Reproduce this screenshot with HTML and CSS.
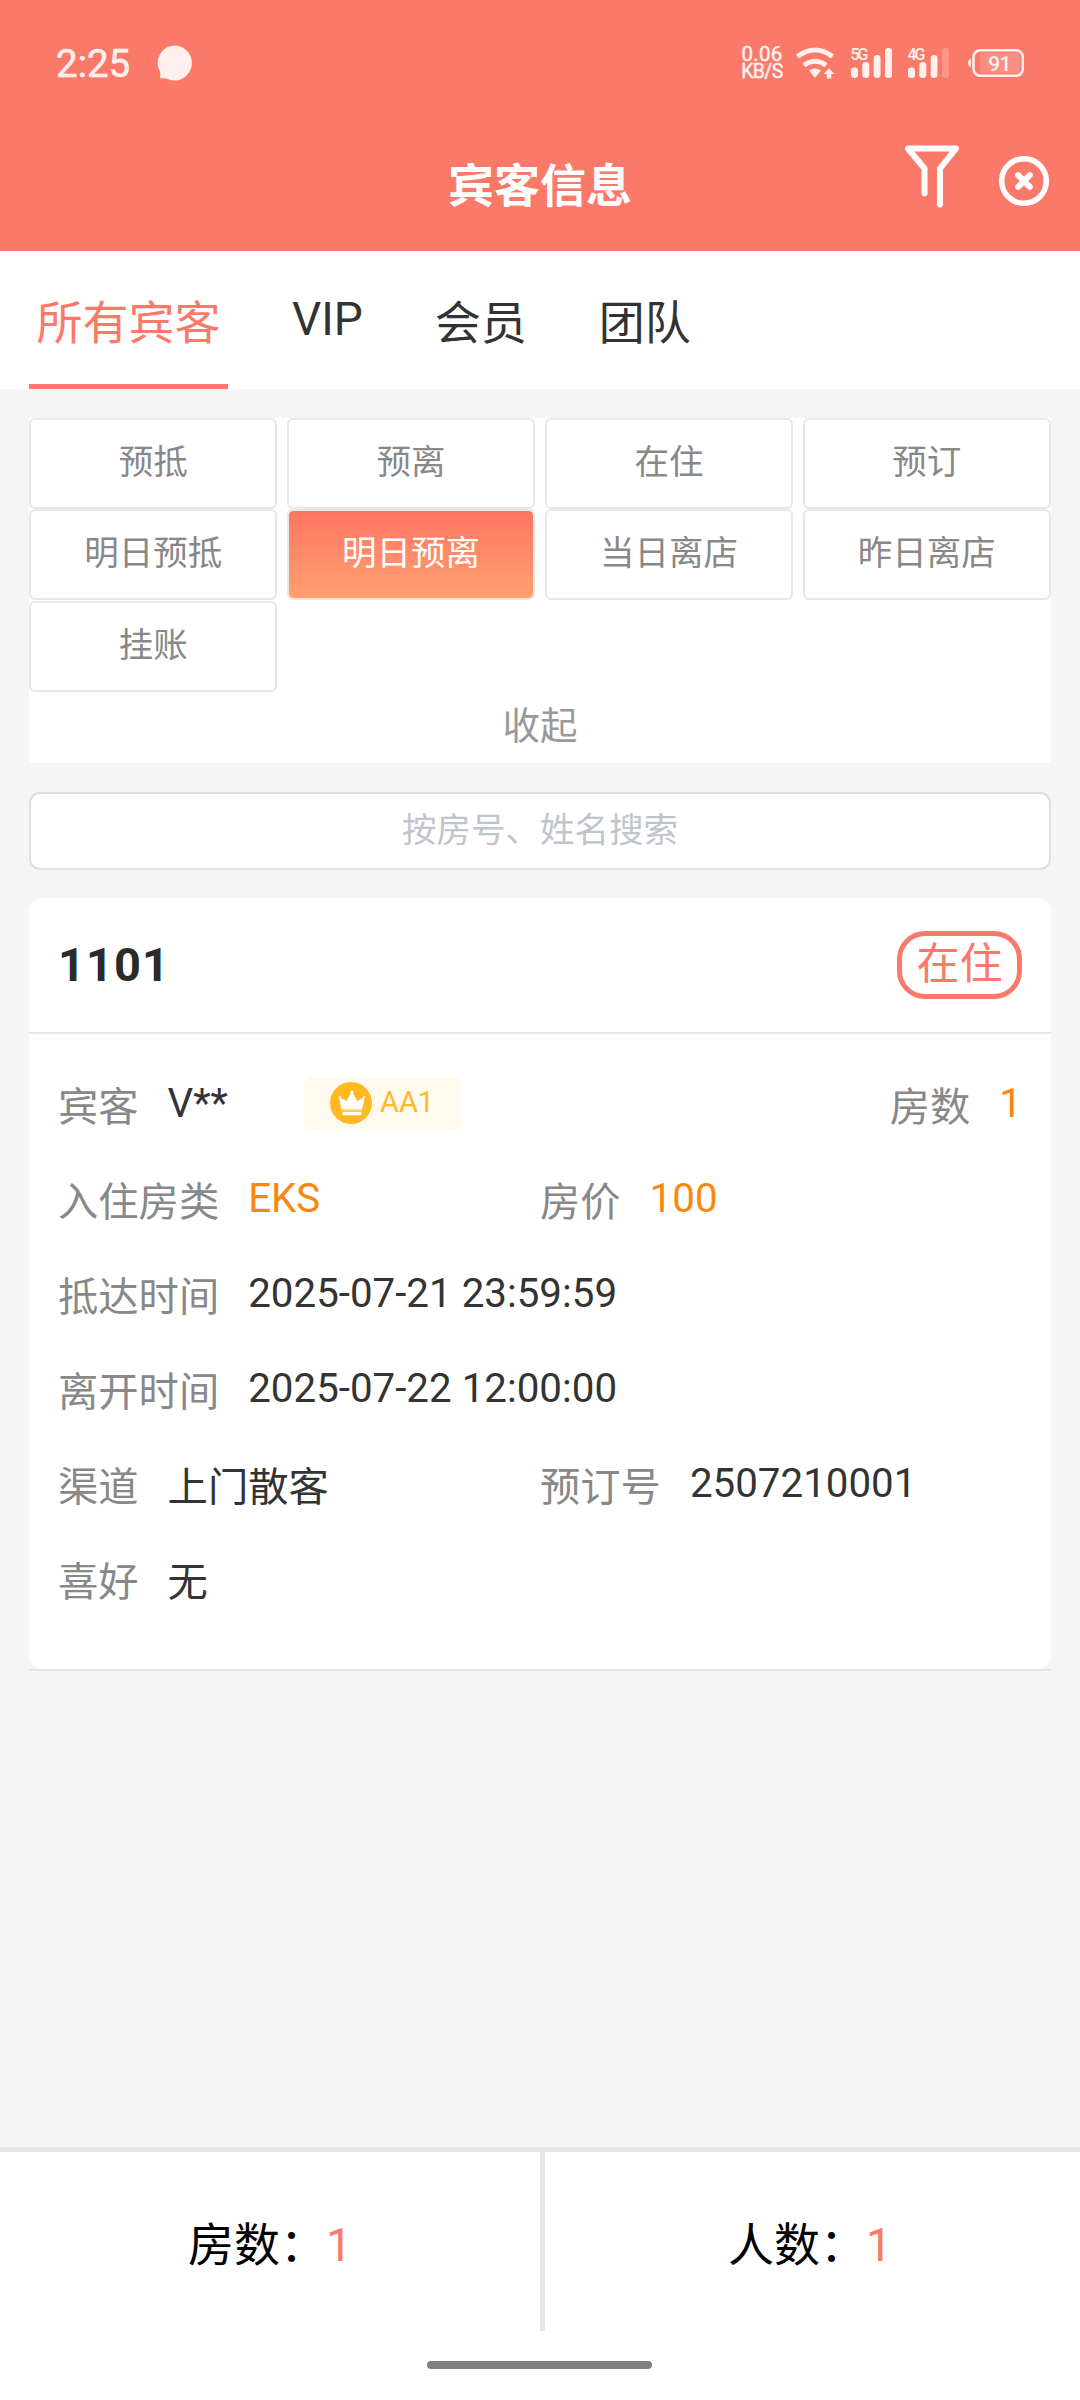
FILE: index.html
```html
<!DOCTYPE html>
<html lang="zh-CN">
<head>
<meta charset="utf-8">
<title>宾客信息</title>
<link rel="stylesheet" href="styles.css">
</head>
<body>
<div class="app">
  <header class="header">
    <div class="status">
      <span class="time">2:25</span>
      <svg class="bubble" width="36" height="36" viewBox="0 0 36 36"><path d="M18 .5a17.3 17.5 0 1 1-8.5 33Q6.500 33 3 33.200 3.500 30 3.200 27A17.300 17.500 0 0 1 18 .5z"/></svg>
      <div class="net"><span>0.06</span><span>KB/S</span></div>
      <svg class="wifi" width="41" height="32" viewBox="0 0 41 32">
        <path class="arc" d="M2.500 9.500Q20 -3.500 37.500 9.500M9 18.200Q20 10.200 31 18.200"/>
        <path d="M14 23.500Q20 19.300 26 23.500L20 30.700z"/>
        <path d="M34 22l5.500 5.500H36.200V32H31.800V27.500H28.500z" transform="matrix(1 0 0 1 0 -0.500)"/>
      </svg>
      <svg class="signal" width="42" height="32" viewBox="0 0 42 32">
        <text x="-0.500" y="12.500" textLength="18">5G</text>
        <rect x="0" y="20.500" width="7" height="10.500" rx="3.300"/><rect x="11.300" y="15" width="7" height="16" rx="3.300"/><rect x="22.700" y="8" width="6.800" height="23" rx="3.300"/><rect x="34" y="1" width="7" height="30" rx="3.300"/>
      </svg>
      <svg class="signal last" width="42" height="32" viewBox="0 0 42 32">
        <text x="-0.500" y="12.500" textLength="18">4G</text>
        <rect x="0" y="20.500" width="7" height="10.500" rx="3.300"/><rect x="11.300" y="15" width="7" height="16" rx="3.300"/><rect x="22.700" y="8" width="6.800" height="23" rx="3.300"/><rect class="dim" x="34" y="1" width="7" height="30" rx="3.300"/>
      </svg>
      <svg class="battery" width="56" height="28" viewBox="0 0 56 28">
        <path d="M3 10v8Q0 17.500 0 14T3 10z"/>
        <rect class="case" x="5.500" y="1.200" width="49.300" height="25.600" rx="7"/>
        <rect class="charge" x="12" y="3.500" width="40" height="21" rx="4"/>
        <text x="31.500" y="22" text-anchor="middle">91</text>
      </svg>
    </div>
    <div class="titlebar">
      <span></span>
      <h1>宾客信息</h1>
      <div class="actions">
        <svg width="56" height="66" viewBox="0 0 56 66"><path d="M20.500 51.500V26.500L4 6.500H52L36 26.500V62.500"/></svg>
        <svg width="50" height="50" viewBox="0 0 50 50"><circle cx="25" cy="25" r="22.300"/><path class="cross" d="M19.200 19.200l11.600 11.600M30.800 19.200L19.200 30.800"/></svg>
      </div>
    </div>
  </header>

  <nav class="tabs">
    <a class="tab active">所有宾客</a>
    <a class="tab latin">VIP</a>
    <a class="tab">会员</a>
    <a class="tab">团队</a>
  </nav>

  <main class="main">
    <section class="filters">
      <div class="chips">
        <span class="chip">预抵</span><span class="chip">预离</span><span class="chip">在住</span><span class="chip">预订</span>
        <span class="chip">明日预抵</span><span class="chip selected">明日预离</span><span class="chip">当日离店</span><span class="chip">昨日离店</span>
        <span class="chip">挂账</span>
      </div>
      <div class="collapse">收起</div>
    </section>

    <input class="search" type="text" placeholder="按房号、姓名搜索">

    <section class="card-wrap">
      <div class="card">
        <div class="card-head"><strong>1101</strong><span class="tag">在住</span></div>
        <div class="card-body">
          <div class="row first">
            <div class="field"><span class="label">宾客</span><span class="value">V**</span></div>
            <div class="badge">
              <svg width="42" height="42" viewBox="0 0 42 42"><circle class="coin" cx="21" cy="21" r="21"/><path d="M11.500 27.500L9 15.500Q8 14 10 14 11.500 14 11 16L16.500 19 20.500 11.500Q20 8.500 22 8.500T23.200 11.500L27 19 33 16Q32.500 14 34.500 14T34.500 16L32 27.500z"/><path d="M12.500 28.500H31.500V32Q31.500 33.200 30 33.200H14Q12.500 33.200 12.500 32z"/><path class="band" d="M11.500 29.300H32"/></svg>
              <span>AA1</span>
            </div>
            <div class="field end"><span class="label">房数</span><span class="value orange">1</span></div>
          </div>
          <div class="row">
            <div class="field"><span class="label">入住房类</span><span class="value orange">EKS</span></div>
            <div class="field"><span class="label">房价</span><span class="value orange">100</span></div>
          </div>
          <div class="row"><div class="field"><span class="label">抵达时间</span><span class="value">2025-07-21 23:59:59</span></div></div>
          <div class="row"><div class="field"><span class="label">离开时间</span><span class="value">2025-07-22 12:00:00</span></div></div>
          <div class="row">
            <div class="field"><span class="label">渠道</span><span class="value cjk">上门散客</span></div>
            <div class="field"><span class="label">预订号</span><span class="value">2507210001</span></div>
          </div>
          <div class="row"><div class="field"><span class="label">喜好</span><span class="value cjk">无</span></div></div>
        </div>
      </div>
    </section>
  </main>

  <footer class="footer">
    <div class="totals">
      <div class="total">房数：<b>1</b></div>
      <div class="total">人数：<b>1</b></div>
    </div>
    <div class="home"></div>
  </footer>
</div>
</body>
</html>
```
FILE: styles.css
```css
* { box-sizing: border-box; }

body {
  margin: 0;
  font-family: Roboto, "Noto Sans CJK SC", sans-serif;
  color: #333;
  background: #f5f5f5;
}

.app {
  display: flex;
  flex-direction: column;
  width: 1080px;
  height: 2400px;
}

/* Header */
.header {
  height: 251px;
  background: #fb7969;
  color: #fff;
}

.status {
  display: flex;
  align-items: flex-start;
  height: 126px;
  padding: 45px 56px 0 56px;
  color: #fff0ee;
  fill: #fff0ee;
}

.time {
  width: 101px;
  font-size: 38.5px;
  line-height: 38px;
  -webkit-text-stroke: 0.6px;
}

.net {
  display: flex;
  flex-direction: column;
  width: 44px;
  margin: 1px 11px 0 auto;
  font-size: 19.5px;
  line-height: 18px;
  text-align: center;
  letter-spacing: -0.6px;
  -webkit-text-stroke: 0.5px;
}

.net span:first-child {
  font-size: 20.5px;
  line-height: 17px;
  letter-spacing: 0.2px;
}

.wifi { margin: 2px 15px 0 0; }
.wifi .arc { fill: none; stroke: #fff0ee; stroke-width: 5; }
.signal { margin: 2px 15px 0 0; overflow: visible; }
.signal.last { margin-right: 18px; }
.signal text { font-size: 16px; font-weight: 500; }
.signal .dim { opacity: 0.25; }
.battery { margin-top: 4px; }
.battery .case { fill: none; stroke: #fff0ee; stroke-width: 2.5; }
.battery .charge { opacity: 0.18; }
.battery text { font-size: 21px; font-weight: 500; letter-spacing: -0.8px; }

.titlebar {
  display: grid;
  grid-template-columns: 1fr auto 1fr;
  height: 125px;
}

.titlebar h1 {
  margin: 0;
  padding-top: 30px;
  font-size: 46px;
  line-height: 60px;
  font-weight: 700;
}

.actions {
  display: flex;
  justify-content: flex-end;
  gap: 39px;
  padding: 16px 31px 0 0;
}

.actions svg { fill: none; stroke: #fff; stroke-width: 6; stroke-linecap: round; stroke-linejoin: round; }
.actions svg:last-child { margin-top: 14px; stroke-width: 5.5; }
.actions .cross { stroke-width: 6; }

/* Tabs */
.tabs {
  display: flex;
  gap: 56px;
  height: 138px;
  padding-left: 29px;
  background: #fff;
}

.tab {
  padding: 42px 8px 0;
  font-size: 46px;
  line-height: 60px;
}

.tab.latin { padding-top: 38px; }
.tab.active { padding: 42px 7.5px 0; color: #fb7969; border-bottom: 5px solid #fb7969; }

/* Content */
.main {
  flex: 1;
  padding: 29px;
}

.filters { height: 345px; background: #fff; }

.chips {
  display: grid;
  grid-template-columns: repeat(4, 1fr);
  grid-template-rows: 91px 92px 91px;
  column-gap: 9.5px;
}

.chip {
  height: 91px;
  border: 2px solid #e8e8e8;
  border-radius: 6px;
  font-size: 34.5px;
  line-height: 85px;
  text-align: center;
  color: #888;
}

.chip.selected {
  color: #fff;
  background: linear-gradient(#ff7463, #ffa16f) padding-box;
}

.collapse {
  font-size: 37.5px;
  line-height: 68px;
  text-align: center;
  color: #999;
}

.search {
  display: block;
  width: 100%;
  height: 78px;
  margin-top: 29px;
  padding: 0 0 2px;
  border: 2px solid #dcdfe6;
  border-radius: 11px;
  background: #fff;
  font: 34.5px Roboto, "Noto Sans CJK SC", sans-serif;
  text-align: center;
}

.search::placeholder { color: #c0c4cc; }

.card-wrap { margin-top: 28px; border-bottom: 2px solid #e6e6e6; }
.card { height: 771px; border-radius: 14px; background: #fff; }

.card-head {
  display: flex;
  align-items: center;
  justify-content: space-between;
  height: 136px;
  padding: 0 29px;
  border-bottom: 2px solid #e8e8e8;
}

.card-head strong {
  font-size: 47px;
  line-height: 60px;
  letter-spacing: 1px;
  color: #2a2a2a;
}

.tag {
  width: 125px;
  height: 68px;
  border: 5px solid #fb7969;
  border-radius: 28px;
  font-size: 43px;
  line-height: 56px;
  text-align: center;
  color: #fb7969;
}

.card-body { padding: 47px 29px 0; }

.row {
  display: grid;
  grid-template-columns: 482px 1fr;
  height: 95px;
  font-size: 40.3px;
  line-height: 46px;
}

.row.first { grid-template-columns: 246px 157px 1fr; }
.field { display: flex; align-items: flex-start; gap: 29px; white-space: nowrap; }
.field.end { justify-content: flex-end; }
.label { padding-top: 4px; color: #888; }
.value.cjk { padding-top: 4px; }
.orange { color: #f8870f; }

.badge {
  display: flex;
  align-items: center;
  gap: 8px;
  height: 53px;
  margin-top: -4px;
  padding-left: 26px;
  border-radius: 7px;
  background: #fff9ee;
  color: #fdb927;
  font-size: 29px;
}

.badge span { padding-bottom: 3px; }
.badge svg { margin-bottom: 2px; fill: #fff; }
.badge .coin { fill: #ffb923; }
.badge .band { stroke: #ffc44a; stroke-width: 1.5; }

/* Footer */
.footer {
  height: 253px;
  border-top: 5px solid #e6e6e6;
  background: #fff;
}

.totals { display: grid; grid-template-columns: 1fr 1fr; height: 178px; }

.total {
  padding-top: 8px;
  font-size: 46px;
  line-height: 171px;
  text-align: center;
  color: #000;
}

.total + .total { border-left: 5px solid #e6e6e6; padding-right: 5px; }
.total b { font-weight: 400; color: #fb7969; }

.home {
  width: 225px;
  height: 8px;
  margin: 31px 428px 0 427px;
  border-radius: 4px;
  background: #808080;
}
```
